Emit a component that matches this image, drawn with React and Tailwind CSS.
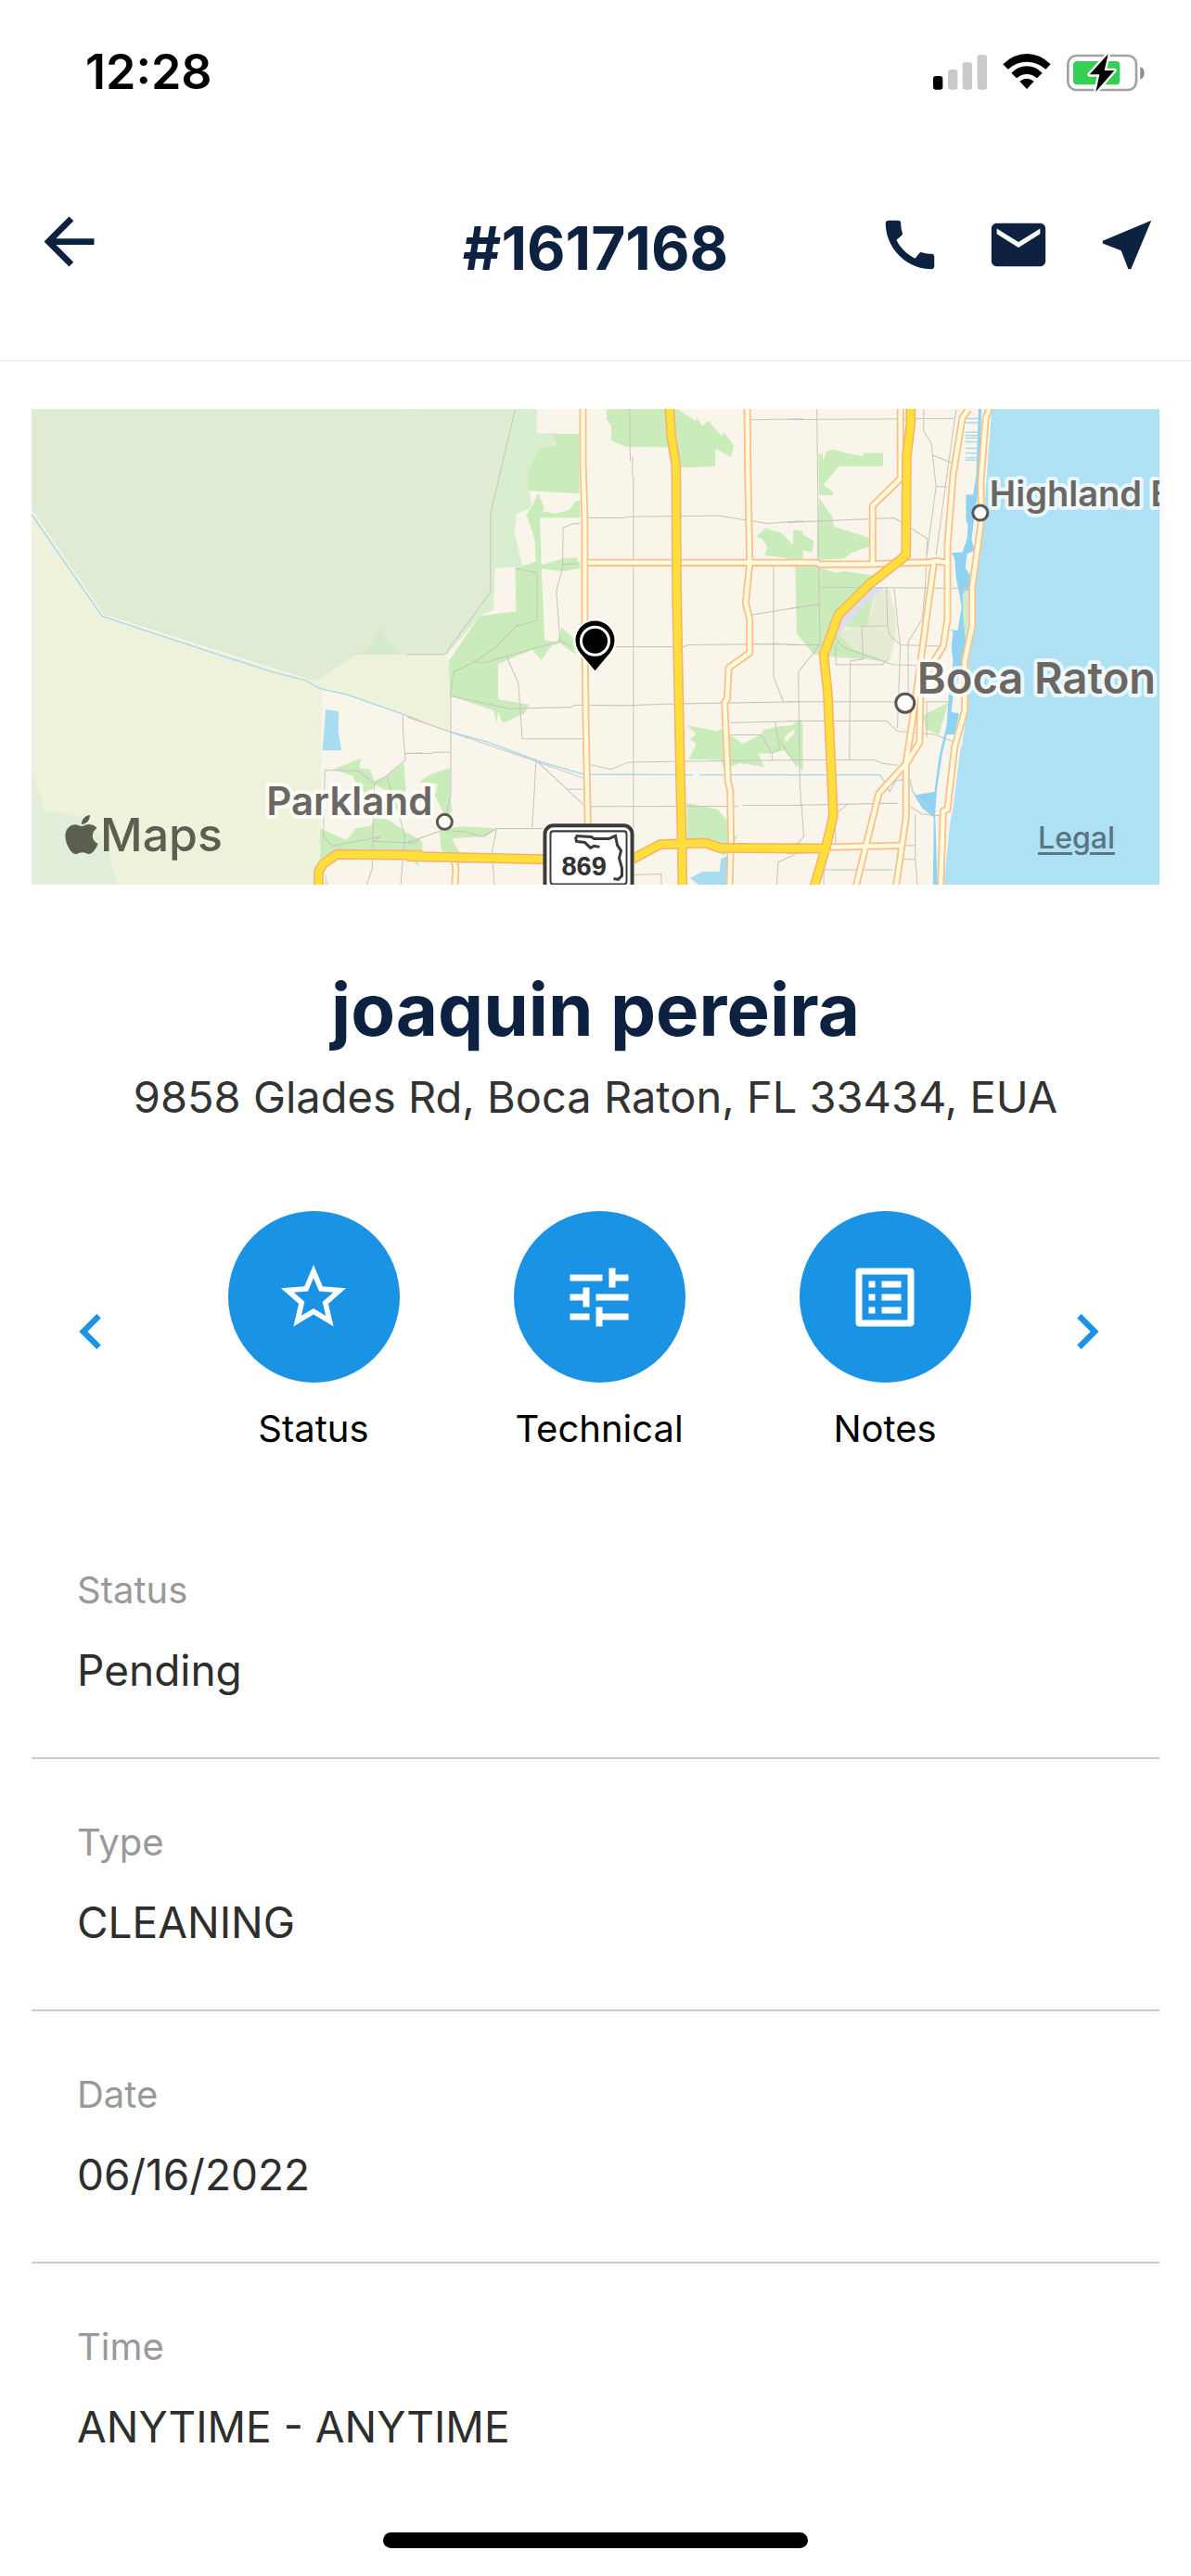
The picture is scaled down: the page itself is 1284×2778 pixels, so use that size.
import React from 'react';
import {
  MdArrowBack,
  MdCall,
  MdChevronLeft,
  MdChevronRight,
  MdEmail,
  MdListAlt,
  MdNearMe,
  MdStarBorder,
  MdTune,
} from 'react-icons/md';
import { FaApple } from 'react-icons/fa';

const order = {
  number: '#1617168',
  customer: 'joaquin pereira',
  address: '9858 Glades Rd, Boca Raton, FL 33434, EUA',
  fields: [
    { label: 'Status', value: 'Pending' },
    { label: 'Type', value: 'CLEANING' },
    { label: 'Date', value: '06/16/2022' },
    { label: 'Time', value: 'ANYTIME - ANYTIME' },
  ],
};

const actions = [
  { label: 'Status', icon: MdStarBorder },
  { label: 'Technical', icon: MdTune },
  { label: 'Notes', icon: MdListAlt },
];

// The map is kept as three tiles, west to east, each with its own grid
const tiles = [
  {
    transform: 'translate(30 430) scale(0.3333 0.3444)',
    areas: [
      ['#eff2da', '12,350 245,680 900,880 1065,800 1275,800 1275,1010 1040,930 950,910 945,1522 12,1522'],
      ['#e1efda', '12,1160 55,1295 120,1295 190,1320 250,1380 290,1522 12,1522'],
      ['#dfecd3', '12,33 1275,33 1275,800 1065,800 930,885 245,675 12,345'],
      ['#d3eacb', '1065,800 1120,765 1138,718 1170,765 1200,800'],
      ['#caecba', '985,1160 1078,1125 1070,1155 1105,1160 1120,1195 1160,1180 1215,1140 1222,1220 1195,1290 1170,1230 1125,1210 1090,1240 1060,1200 1050,1180'],
      ['#caecba', '945,1345 1030,1380 1060,1345 1110,1335 1120,1305 1170,1320 1230,1360 1275,1385 1275,1420 1000,1415 945,1480'],
      ['#caecba', '960,1480 972,1522 960,1522'],
      ['#a7dcf1', '963,973 1005,978 1003,1040 1014,1100 952,1100'],
    ],
    canals: ['12,362 240,680 420,738 790,855 895,880 945,907 1030,925 1215,988'],
    streets: [
      '1215,988 1275,1010', '1212,990 1212,1030 1220,1130 1160,1180 1120,1205 1070,1165 960,1162 955,1370 985,1400 1140,1370 1115,1385 1250,1390 1275,1370',
      '1220,1110 1275,1108', '1160,1180 1185,1260 1200,1300 1218,1370 1205,1522', '1120,1205 1115,1390 1113,1470 1095,1522', '1235,1248 1275,1230',
    ],
    roads: [],
    highways: ['940,1530 940,1478 955,1455 1000,1425 1275,1428'],
  },
  {
    transform: 'translate(440 430) scale(0.3333 0.3444)',
    areas: [
      ['#eff2da', '-5,800 118,800 132,830 137,1043 -5,998'],
      ['#d9edcf', '345,33 415,33 415,108 475,108 480,180 395,230 390,290 400,340 350,360 342,420 370,525 280,530 275,660 230,680 125,800 118,795 265,605 265,360'],
      ['#dfecd3', '-5,33 345,33 265,360 265,605 118,800 -5,800'],
      ['#caecba', '465,110 552,110 552,297 388,287 385,230 420,155 480,148'],
      ['#caecba', '640,33 870,33 930,70 930,55 950,85 970,70 1010,115 1020,105 1052,148 1042,182 992,155 992,212 880,216 845,152 700,150 657,132 655,85 640,65'],
      ['#caecba', '380,365 400,335 420,295 440,345 430,350 470,360 520,348 540,320 555,318 555,372 425,372 430,520 500,500 545,497 555,530 500,540 430,532 440,755 480,762 495,715 530,745 540,800 490,765 460,775 430,818 400,785 290,830 290,940 392,957 375,985 305,1015 290,980 285,1015 275,975 135,930 130,820 230,680 348,665 345,530 412,510 408,440 385,370'],
      ['#caecba', '900,1022 1000,1040 1010,1032 1080,1080 1140,1050 1150,1035 1200,1025 1275,1020 1275,1165 1215,1100 1170,1110 1130,1110 1150,1152 1070,1140 1020,1160 1010,1130 905,1128 930,1080 910,1065 930,1050'],
      ['#f9f5ea', '1215,1060 1250,1030 1250,1045 1220,1075'],
      ['#caecba', '900,1265 1000,1285 1030,1320 1040,1370 1065,1365 1050,1395 1020,1430 970,1400 900,1390'],
      ['#a7dcf1', '910,1500 950,1480 1005,1480 1010,1440 1030,1430 1030,1522 940,1522'],
      ['#caecba', '1125,430 1155,405 1205,420 1245,460 1245,410 1275,415 1275,505 1150,490 1160,465 1145,440'],
      ['#caecba', '35,1200 70,1175 135,1155 135,1240 142,1290 120,1310 85,1240 95,1205'],
      ['#caecba', '100,1345 180,1338 285,1345 250,1370 140,1375 185,1455 145,1450 105,1410'],
      ['#caecba', '-5,1360 20,1375 45,1400 25,1425 35,1465 -5,1430'],
    ],
    canals: ['137,1043 260,1075 415,1132 565,1175 920,1177', '942,1177 1275,1177'],
    streets: [
      '-5,995 137,1043 400,1130 565,1187', '137,930 137,1240 120,1310', '-5,1110 75,1110 80,1106 137,1106', '-5,1390 110,1350 180,1355 240,1370 285,1345 435,1345',
      '135,930 145,855 210,825 250,825 490,758 530,775', '490,758 478,600 498,530 500,403 530,392 555,390', '498,518 555,516', '318,808 355,890 368,1064 565,1064',
      '135,930 330,970 525,965 540,958 700,960 830,955 1015,952 1275,948', '413,1125 400,1342', '413,1132 565,1270', '515,1222 565,1222', '590,1145 655,1160 710,1137 1275,1130',
      '590,1276 1065,1275', '1080,1272 1275,1272', '285,1345 270,1420 278,1522', '715,33 717,195', '724,180 724,240 727,245 727,1345', '580,373 695,373 715,369 1005,366 1160,390 1275,382',
      '670,776 890,776 905,770 1190,767 1275,770', '1105,66 1275,63', '345,530 415,545 415,695 350,710 285,775 210,825', '1110,676 1180,665 1275,650', '1180,520 1180,870 1212,948',
      '1040,1014 1275,1008', '1040,1052 1140,1052 1175,1110 1175,1130', '1175,1110 1200,1095 1185,1010', '1200,1070 1255,1150', '730,1490 817,1487 817,1522', '1250,1425 1195,1450 1190,1522', '345,33 265,360 265,605 118,800 -5,800',
    ],
    roads: [
      '564,20 564,200 570,380 570,760 573,990 580,1340', '580,513 1275,513', '1095,20 1097,230 1103,513 1090,640 1103,690 1103,795 1035,842 1030,940 1022,950 1033,1200 1040,1225 1042,1370 1038,1530', '143,1420 153,1470 150,1530',
    ],
    highways: [
      '843,20 850,120 865,210 867,600 878,1150 884,1400 886,1530', '-5,1432 450,1441', '725,1440 812,1395 960,1390 1005,1405 1275,1407',
    ],
  },
  {
    transform: 'translate(850 430) scale(0.3333 0.3444)',
    areas: [
      ['#aee1f4', '655,33 1210,33 1210,1522 500,1522 520,1330 530,1280 553,1100 560,1080 575,970 580,830 600,700 605,560 620,400 630,350 640,230'],
      ['#8fd2f2', '525,482 560,480 575,440 578,395 572,380 572,300 595,300 605,240 612,33 622,33 615,260 600,360 590,440 600,475 575,485 570,530 585,550 582,600 562,610 565,700 580,720 575,800 560,840 550,870 530,930 525,980 550,985 535,1050 510,1050 495,1110 478,1220 472,1300 480,1522 465,1522 468,1310 430,1280 405,1240 470,1230 485,1120 510,1020 515,940 530,820 525,780 530,730 520,722 545,725 558,650 540,560 535,500'],
      ['#d3eac6', '565,600 582,600 580,690 572,770 562,680'],
      ['#caecba', '95,175 108,170 110,195 120,165 145,158 180,170 240,180 240,170 304,170 304,212 160,212 150,225 110,270 135,285 145,302 97,302'],
      ['#caecba', '97,310 140,370 145,400 260,435 262,462 200,482 180,500 90,505 90,430'],
      ['#caecba', '15,410 80,445 75,480 30,470 30,495 10,480'],
      ['#caecba', '20,525 90,525 150,545 180,540 280,555 250,580 160,680 115,800 80,800 25,735'],
      ['#e6ebd3', '320,590 345,670 345,740 325,820 230,800 150,740 260,680 280,610'],
      ['#caecba', '280,600 250,710 180,715 160,740 210,785 320,822 115,805 150,740 230,640'],
      ['#dcdfe8', '250,590 310,590 240,650 160,740 150,700 190,640'],
      ['#caecba', '435,990 515,950 485,1050 440,1035'],
      ['#caecba', '-5,1080 20,1040 -5,1030 42,1000 42,1080 35,1150 -5,1110'],
    ],
    canals: ['-5,1177 295,1177 325,1230 345,1195 390,1190 400,1230 470,1300', '570,62 612,62', '570,75 612,75', '570,105 612,105', '570,115 612,115', '570,123 612,123', '570,135 612,135', '570,155 612,155', '570,170 612,170', '570,185 612,185', '570,192 612,192'],
    streets: [
      '90,33 95,480 100,770', '-5,65 530,62', '-5,387 340,373 370,390 447,438 440,590 430,690 385,760 385,940', '435,33 435,100 460,140 475,275 445,490', '540,33 505,275 475,490', '465,177 525,200', '475,275 510,275',
      '-5,658 95,643', '105,590 590,593', '340,595 355,740 360,770 505,775', '315,590 318,710 235,712 240,815 198,820 195,1130', '318,710 325,740 360,770 350,1030', '150,750 180,780 335,832 415,834', '150,770 152,832 300,832 320,815',
      '-5,770 100,770 30,855 35,1210 48,1370 -5,1425', '-5,948 520,948', '-5,1008 315,1008 350,1040 470,1050 535,1075', '445,950 445,1060', '35,1130 275,1130 300,1140 350,1147', '-5,1272 305,1266 350,1266', '190,1268 150,1300 150,1395',
      '390,1275 430,1300 490,1305', '408,1300 408,1440 415,1522', '365,1398 408,1398', '365,1441 408,1441', '112,1420 112,1522', '112,1474 335,1474',
    ],
    roads: [
      '360,20 360,250 270,335 270,513', '-5,513 90,513 100,518 240,518 400,513 450,512 475,508 510,513', '580,33 560,60 530,240 512,460 512,690 498,775 465,825 425,900 422,1075 380,1140 290,1235 215,1530', '468,513 420,860 400,1000 378,1140 378,1310 345,1530',
      '650,20 635,65 620,260 620,390 592,590 592,710 568,820 568,975 535,1090 512,1285 498,1290 490,1530', '130,1403 365,1398',
    ],
    highways: ['393,20 393,80 380,180 378,490 320,535 260,580 160,675 112,800 125,920 143,1305 120,1400 80,1530', '-5,1407 130,1407'],
  },
];

const places = [
  { name: 'Parkland', x: 287, y: 879, size: 42, dot: [479, 886, 8] },
  { name: 'Boca Raton', x: 988, y: 748, size: 47, dot: [975, 758, 10] },
  { name: 'Highland B', x: 1066, y: 546, size: 38, dot: [1056, 553, 8] },
];

const TileLayer = ({ of, color, width }) =>
  tiles.map((tile) => (
    <g key={tile.transform} transform={tile.transform} fill="none" stroke={color} strokeWidth={width} strokeLinejoin="round">
      {tile[of].map((points) => (
        <polyline key={points} points={points} />
      ))}
    </g>
  ));

const RouteShield = () => (
  <g fill="none" stroke="#3b3b3b">
    <rect x="587" y="890" width="94" height="80" rx="9" fill="#fff" strokeWidth="4" />
    <rect x="593" y="896" width="82" height="57" rx="3" strokeWidth="2" />
    <path
      d="M620 902 L621 907 L630 908 L636 914 L640 912 L646 913 M620 901 L637 902 L640 904 L656 904 L663 901 L665 911 L669 917 L667 925 L670 936 L670 944 L666 948 L661 947"
      strokeWidth="3"
    />
    <text x="605" y="944" fontSize="29" fontWeight="700" fill="#333" stroke="none" className="font-['Liberation_Sans',sans-serif]">
      869
    </text>
  </g>
);

const MapPreview = () => (
  <div className="relative overflow-hidden">
    <svg viewBox="34 441 1215 513" className="block w-full" role="img" aria-label="Map of Boca Raton">
      <rect x="34" y="441" width="1215" height="513" fill="#f9f5ea" />
      {tiles.map((tile) => (
        <g key={tile.transform} transform={tile.transform}>
          {tile.areas.map(([fill, points]) => (
            <polygon key={points} points={points} fill={fill} />
          ))}
        </g>
      ))}
      <TileLayer of="streets" color="#c6c4bd" width="3" />
      <TileLayer of="canals" color="#a5d8ef" width="4" />
      <TileLayer of="roads" color="#fbc08e" width="24" />
      <TileLayer of="roads" color="#fffbdc" width="13" />
      <TileLayer of="highways" color="#f9b06c" width="32" />
      <TileLayer of="highways" color="#ffdf3a" width="23" />
      <RouteShield />

      {/* Place labels */}
      {places.map(({ name, x, y, size, dot }) => (
        <g key={name}>
          <circle cx={dot[0]} cy={dot[1]} r={dot[2]} fill="#fff" stroke="#5a5752" strokeWidth="3" />
          <text
            x={x}
            y={y}
            fontSize={size}
            fontWeight="600"
            fill="#6b6763"
            stroke="#fff"
            strokeOpacity="0.75"
            strokeWidth="8"
            strokeLinejoin="round"
            paintOrder="stroke"
          >
            {name}
          </text>
        </g>
      ))}

      {/* Pin */}
      <path
        d="M641 723 L625 704 A21 21 0 1 1 657 704 Z"
        stroke="#fff"
        strokeWidth="3"
        paintOrder="stroke"
      />
      <circle cx="641" cy="691" r="15" fill="#000" stroke="#fff" strokeWidth="3" />
    </svg>

    <div className="absolute bottom-6 left-[30px] flex items-center text-[#5c5e50]">
      <FaApple size={48} />
      <span className="-ml-1 text-[50px] leading-[60px] font-medium">Maps</span>
    </div>
    <a href="#legal" className="absolute right-12 bottom-8 text-[32px] leading-9 font-medium text-[#5a7482] underline decoration-3 underline-offset-4">
      Legal
    </a>
  </div>
);

const StatusBar = () => (
  <div className="flex items-center justify-between pt-12 pr-[50px] pl-[92px]">
    <span className="text-[52px] leading-[60px] font-semibold text-black">12:28</span>
    <div className="flex items-center gap-[17px]">
      <svg viewBox="33 42 174 118" className="w-[58px]" aria-label="Signal">
        <rect x="33" y="114" width="31" height="44" rx="9" />
        <g fill="#cacaca">
          <rect x="81" y="93" width="31" height="65" rx="9" />
          <rect x="128" y="69" width="31" height="89" rx="9" />
          <rect x="176" y="45" width="31" height="113" rx="9" />
        </g>
      </svg>
      <svg viewBox="260 42 156 118" className="w-[52px]" aria-label="Wi-Fi">
        <path d="M261 76 Q295 42 338 42 Q381 42 415 76 L399 92 Q372 68 338 68 Q304 68 277 92 Z" />
        <path d="M288 104 Q310 82 338 82 Q366 82 388 104 L371 121 Q356 108 338 108 Q320 108 305 121 Z" />
        <path d="M315 131 Q338 113 361 131 L338 156 Z" />
      </svg>
      <svg viewBox="466 36 252 128" className="w-[84px]" aria-label="Battery charging">
        <rect x="470" y="45" width="221" height="111" rx="27" fill="#fff" stroke="#a3a1a5" strokeWidth="8" />
        <rect x="487" y="63" width="151" height="76" rx="12" fill="#36cf56" />
        <path d="M704 80 Q717 86 717 101 Q717 116 704 122 Z" fill="#8e8c90" />
        <path
          d="M600 40 L540 106 L572 106 L560 162 L620 93 L588 93 Z"
          stroke="#fff"
          strokeWidth="14"
          strokeLinejoin="round"
          paintOrder="stroke"
        />
      </svg>
    </div>
  </div>
);

const Header = () => (
  <header className="grid grid-cols-[1fr_auto_1fr] items-start border-b-2 border-[#f3f3f3] px-[34px] pt-28 pb-[72px] text-[#0d2240]">
    <button type="button" aria-label="Back" className="justify-self-start">
      <MdArrowBack size={81} />
    </button>
    <h1 className="text-[64px] leading-[96px] font-bold">{order.number}</h1>
    <div className="flex h-[88px] items-center gap-[47px] justify-self-end">
      <button type="button" aria-label="Call">
        <MdCall size={70} />
      </button>
      <button type="button" aria-label="Email">
        <MdEmail size={70} />
      </button>
      <button type="button" aria-label="Directions">
        <MdNearMe size={70} />
      </button>
    </div>
  </header>
);

const ActionBar = () => (
  <nav className="mt-[95px] flex items-center pr-[74px] pl-[60px] text-[#1b93e4]">
    <button type="button" aria-label="Previous">
      <MdChevronLeft size={76} />
    </button>
    <div className="flex flex-1 justify-center gap-[123px] pl-[22px]">
      {actions.map(({ label, icon: Icon }) => (
        <button key={label} type="button" className="flex w-[185px] flex-col items-center gap-[26px]">
          <span className="flex size-[185px] items-center justify-center rounded-full bg-[#1b93e4] text-white">
            <Icon size={84} />
          </span>
          <span className="text-[40px] leading-[48px] text-black">{label}</span>
        </button>
      ))}
    </div>
    <button type="button" aria-label="Next">
      <MdChevronRight size={76} />
    </button>
  </nav>
);

export default function App() {
  return (
    <div className="min-h-screen overflow-hidden bg-white font-['Inter','Liberation_Sans',sans-serif]">
      <StatusBar />
      <Header />
      <main>
        <section className="px-[34px] pt-[51px]">
          <MapPreview />
        </section>

        <section className="pt-[89px] text-center">
          <h2 className="text-[78px] leading-[92px] font-bold text-[#0d2240]">{order.customer}</h2>
          <p className="mt-5 text-[47px] leading-[56px] text-[#333]">{order.address}</p>
        </section>

        <ActionBar />

        <dl className="mt-[60px] px-[34px]">
          {order.fields.map(({ label, value }) => (
            <div key={label} className="border-b-2 border-[#cbcbcb] px-[49px] py-[66px] last:border-b-0">
              <dt className="text-[40px] leading-[48px] text-[#999]">{label}</dt>
              <dd className="mt-[34px] text-[46px] leading-[56px] text-[#2e2e2e]">{value}</dd>
            </div>
          ))}
        </dl>
      </main>
      <div className="mx-auto mt-5 h-[17px] w-[458px] rounded-full bg-black" />
    </div>
  );
}
